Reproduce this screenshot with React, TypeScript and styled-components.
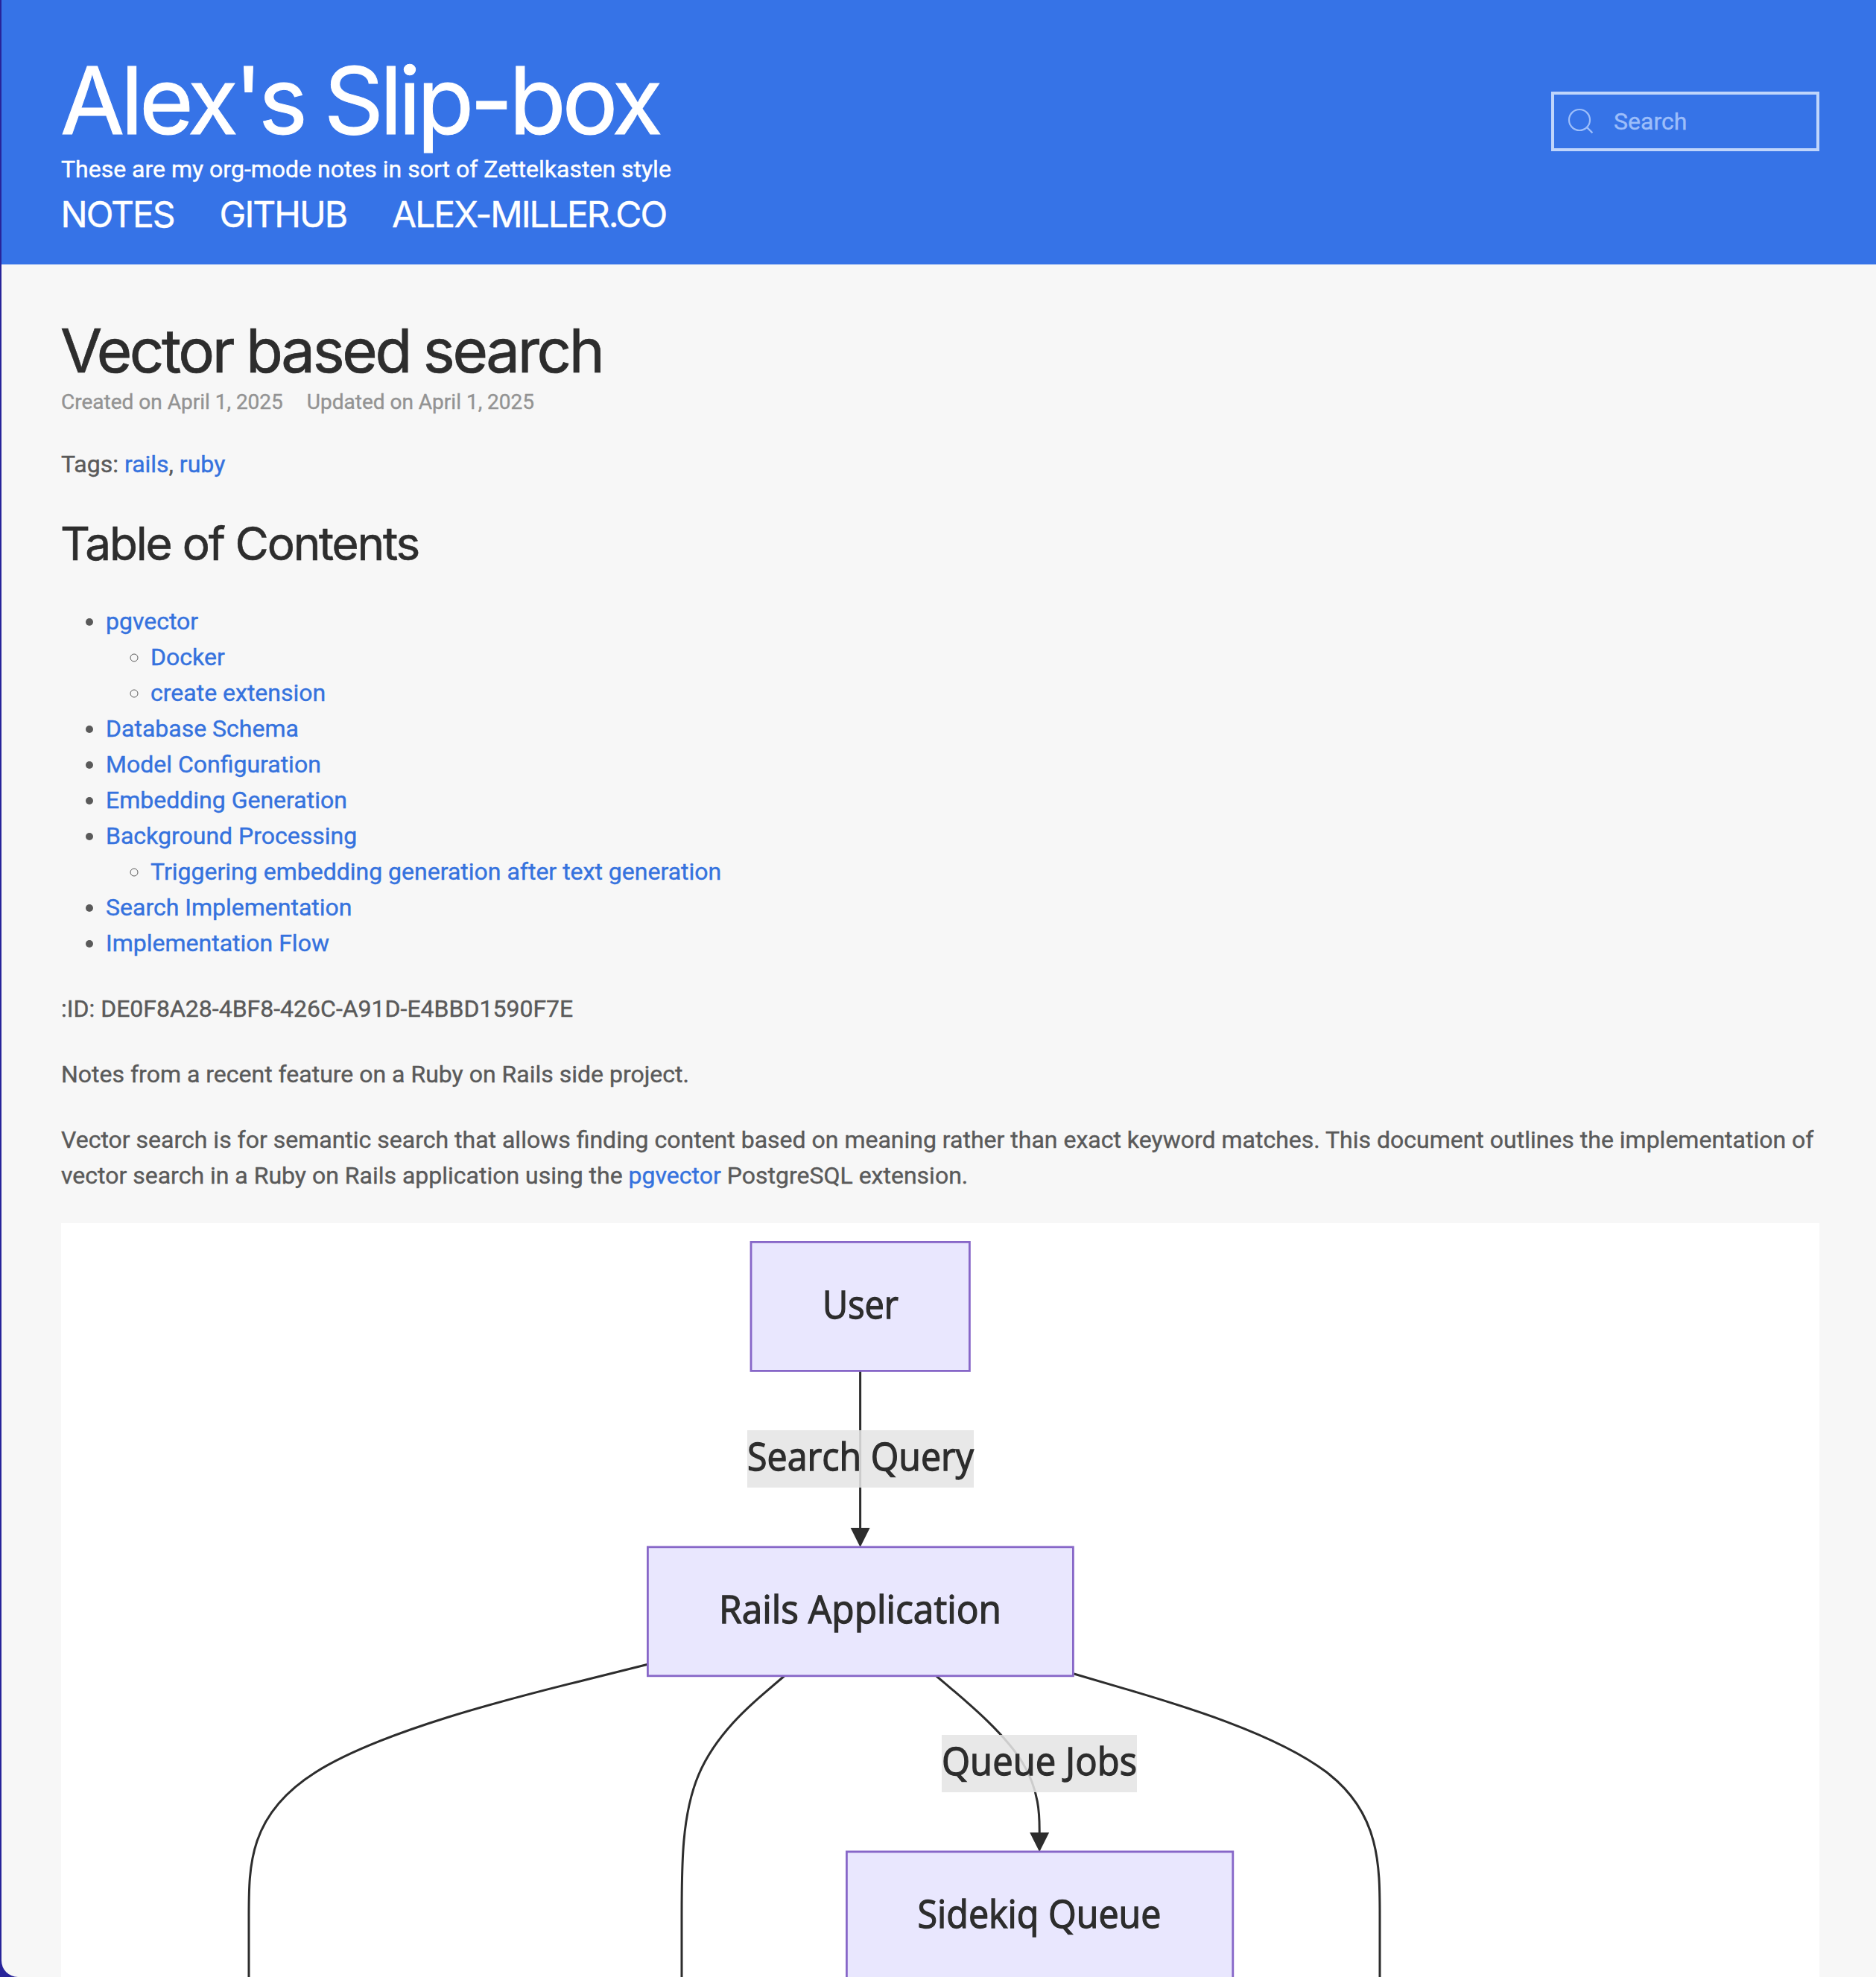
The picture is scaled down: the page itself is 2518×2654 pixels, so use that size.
import React from "react";
import styled, { createGlobalStyle } from "styled-components";

const GlobalStyle = createGlobalStyle`
  *, *::before, *::after { box-sizing: border-box; }
  body {
    margin: 0;
    overflow: hidden;
    font-family: Roboto, "Liberation Sans", sans-serif;
    font-size: 32px;
    line-height: 48px;
    color: #5a5a5a;
    -webkit-text-stroke: 0.4px;
  }
`;

const Desktop = styled.div`
  height: 2654px;
  padding-left: 2px;
  background: #28249a;
  overflow: hidden;
`;

const Page = styled.div`
  height: 2654px;
  background: #f7f7f7;
  border-bottom-left-radius: 22px;
  overflow: hidden;
`;

const Header = styled.header`
  display: flex;
  justify-content: space-between;
  height: 355px;
  padding: 70px 76px 0 80px;
  background: #3673e7;
  color: #fff;
`;

const Brand = styled.div`
  display: flex;
  flex-direction: column;
`;

const SiteTitle = styled.h1`
  margin: 0 0 3px -1px;
  font: 400 125px/130px Inter, sans-serif;
  letter-spacing: -5.25px;
  word-spacing: -3px;
  white-space: nowrap;
  -webkit-text-stroke: 1px;
`;

const Tagline = styled.p`
  margin: 0;
`;

const Nav = styled.nav`
  display: flex;
  gap: 61px;
  margin-top: 9px;
  margin-left: -0.5px;
`;

const NavLink = styled.a`
  font: 400 48px/56px Inter, sans-serif;
  letter-spacing: -2px;
  text-transform: uppercase;
  color: #fff;
  text-decoration: none;
`;

const SearchBox = styled.label`
  display: flex;
  align-items: center;
  width: 360px;
  height: 80px;
  margin-top: 53px;
  padding-left: 16px;
  border: 4px solid #c0d5fb;
  color: #9dbefa;
`;

const SearchInput = styled.input`
  width: 240px;
  margin-left: 24px;
  padding: 0;
  border: 0;
  outline: 0;
  background: transparent;
  font: 400 32px/48px Roboto, sans-serif;
  color: #fff;
  -webkit-text-stroke: 0.4px;
  &::placeholder { color: #9dbefa; opacity: 1; }
`;

const Article = styled.main`
  padding: 66px 76px 0 80px;
`;

const NoteTitle = styled.h2`
  margin: 0 0 1px -1px;
  font: 400 81.5px/100px Inter, sans-serif;
  letter-spacing: -3.42px;
  word-spacing: -1.5px;
  color: #2d2d2d;
  -webkit-text-stroke: 0.7px;
`;

const Meta = styled.div`
  display: flex;
  gap: 32px;
  font-size: 28px;
  line-height: 36px;
  color: #939393;
`;

const Paragraph = styled.p<{ $top?: number }>`
  margin: ${(p) => p.$top ?? 40}px 0 0;
`;

const Link = styled.a`
  color: #3572de;
  text-decoration: none;
`;

const SectionTitle = styled.h3`
  margin: 43px 0 0 -1px;
  font: 400 62px/80px Inter, sans-serif;
  letter-spacing: -2.2px;
  color: #2d2d2d;
  -webkit-text-stroke: 0.6px;
`;

const List = styled.ul<{ $nested?: boolean }>`
  margin: ${(p) => (p.$nested ? 0 : "40px")} 0 0;
  padding-left: 60px;
  list-style: ${(p) => (p.$nested ? "circle" : "disc")};
`;

const Figure = styled.figure`
  margin: 40px 0 0;
  height: 1012px;
  background: #fff;
`;

const Diagram = styled.svg`
  display: block;
  width: 2360px;
  height: 1012px;
  font-family: "Open Sans", "Noto Sans", sans-serif;
  font-size: 51px;
`;

const NodeBox = styled.rect`
  fill: #e9e7fe;
  stroke: #8767c8;
  stroke-width: 2.8px;
`;

const DiagramText = styled.text`
  fill: #2d2d2d;
  stroke: #2d2d2d;
  stroke-width: 1.3px;
`;

const LabelBox = styled.rect`
  fill: rgba(229, 229, 229, 0.87);
`;

const EdgePath = styled.path`
  fill: none;
  stroke: #2d2d2d;
  stroke-width: 3px;
`;

const ArrowHead = styled.path`
  fill: #2d2d2d;
`;

type Point = [number, number];

// Uniform cubic B-spline through control points, clamped at both ends.
function basis(pts: Point[]): string {
  const mix = (...w: [number, Point][]) =>
    [0, 1].map((i) => w.reduce((s, [k, p]) => s + k * p[i], 0).toFixed(2)).join(" ");
  let d = `M${mix([1, pts[0]])}L${mix([5 / 6, pts[0]], [1 / 6, pts[1]])}`;
  for (let i = 1; i < pts.length; i++) {
    const a = pts[i - 1];
    const b = pts[i];
    const c = pts[i + 1] ?? b;
    d += `C${mix([2 / 3, a], [1 / 3, b])} ${mix([1 / 3, a], [2 / 3, b])} ${mix([1 / 6, a], [2 / 3, b], [1 / 6, c])}`;
  }
  return d + `L${mix([1, pts[pts.length - 1]])}`;
}

const edges: Point[][] = [
  [[1072.6, 199], [1072.6, 316], [1072.6, 420]],
  [[786.5, 592.5], [252, 725.5], [252, 930], [252, 1135], [252, 1300]],
  [[970.6, 608], [833, 725.5], [833, 930], [833, 1135], [833, 1300]],
  [[1174.8, 608], [1313.2, 725.5], [1313.2, 832]],
  [[1359.5, 605], [1770, 725.5], [1770, 930], [1770, 1135], [1770, 1300]],
];

const nodes = [
  { text: "User", x: 926, y: 25.4, w: 293.4, tx: 1022, tw: 102 },
  { text: "Rails Application", x: 787.4, y: 434.8, w: 571, tx: 883, tw: 379 },
  { text: "Sidekiq Queue", x: 1054.4, y: 843.8, w: 518.4, tx: 1149.5, tw: 327 },
];

const labels = [
  { text: "Search Query", x: 921, y: 278, w: 304 },
  { text: "Queue Jobs", x: 1182, y: 687, w: 262 },
];

const arrows: Point[] = [
  [1072.6, 409],
  [1313.2, 818],
];

const toc = [
  { title: "pgvector", children: ["Docker", "create extension"] },
  { title: "Database Schema" },
  { title: "Model Configuration" },
  { title: "Embedding Generation" },
  { title: "Background Processing", children: ["Triggering embedding generation after text generation"] },
  { title: "Search Implementation" },
  { title: "Implementation Flow" },
];

function SearchIcon() {
  return (
    <svg width="40" height="40" viewBox="0 0 20 20" fill="none" stroke="currentColor">
      <circle cx="9" cy="9" r="7" strokeWidth="1.1" />
      <path d="M14 14 L18 18" strokeWidth="1.1" transform="translate(-0.3 -0.3)" />
    </svg>
  );
}

function FlowDiagram() {
  return (
    <Diagram viewBox="0 0 2360 1012">
      {edges.map((pts, i) => (
        <EdgePath key={i} d={basis(pts)} />
      ))}
      {arrows.map(([x, y]) => (
        <ArrowHead key={x} d={`M${x - 13} ${y}H${x + 13}L${x} ${y + 26}Z`} />
      ))}
      {labels.map((l) => (
        <g key={l.text}>
          <LabelBox x={l.x} y={l.y} width={l.w} height={77} />
          <DiagramText x={l.x} y={l.y + 54} textLength={l.w} lengthAdjust="spacingAndGlyphs">
            {l.text}
          </DiagramText>
        </g>
      ))}
      {nodes.map((n) => (
        <g key={n.text}>
          <NodeBox x={n.x} y={n.y} width={n.w} height={173} />
          <DiagramText x={n.tx} y={n.y + 102.5} textLength={n.tw} lengthAdjust="spacingAndGlyphs">
            {n.text}
          </DiagramText>
        </g>
      ))}
    </Diagram>
  );
}

export default function App() {
  return (
    <Desktop>
      <GlobalStyle />
      <Page>
        <Header>
          <Brand>
            <SiteTitle>Alex's Slip-box</SiteTitle>
            <Tagline>These are my org-mode notes in sort of Zettelkasten style</Tagline>
            <Nav>
              <NavLink>Notes</NavLink>
              <NavLink>Github</NavLink>
              <NavLink>alex-miller.co</NavLink>
            </Nav>
          </Brand>
          <SearchBox>
            <SearchIcon />
            <SearchInput placeholder="Search" />
          </SearchBox>
        </Header>
        <Article>
          <NoteTitle>Vector based search</NoteTitle>
          <Meta>
            <span>Created on April 1, 2025</span>
            <span>Updated on April 1, 2025</span>
          </Meta>
          <Paragraph $top={41}>
            Tags: <Link>rails</Link>, <Link>ruby</Link>
          </Paragraph>
          <SectionTitle>Table of Contents</SectionTitle>
          <List>
            {toc.map((item) => (
              <li key={item.title}>
                <Link>{item.title}</Link>
                {item.children && (
                  <List $nested>
                    {item.children.map((child) => (
                      <li key={child}>
                        <Link>{child}</Link>
                      </li>
                    ))}
                  </List>
                )}
              </li>
            ))}
          </List>
          <Paragraph>:ID: DE0F8A28-4BF8-426C-A91D-E4BBD1590F7E</Paragraph>
          <Paragraph>Notes from a recent feature on a Ruby on Rails side project.</Paragraph>
          <Paragraph>
            Vector search is for semantic search that allows finding content based on meaning rather than exact
            keyword matches. This document outlines the implementation of vector search in a Ruby on Rails
            application using the <Link>pgvector</Link> PostgreSQL extension.
          </Paragraph>
          <Figure>
            <FlowDiagram />
          </Figure>
        </Article>
      </Page>
    </Desktop>
  );
}
